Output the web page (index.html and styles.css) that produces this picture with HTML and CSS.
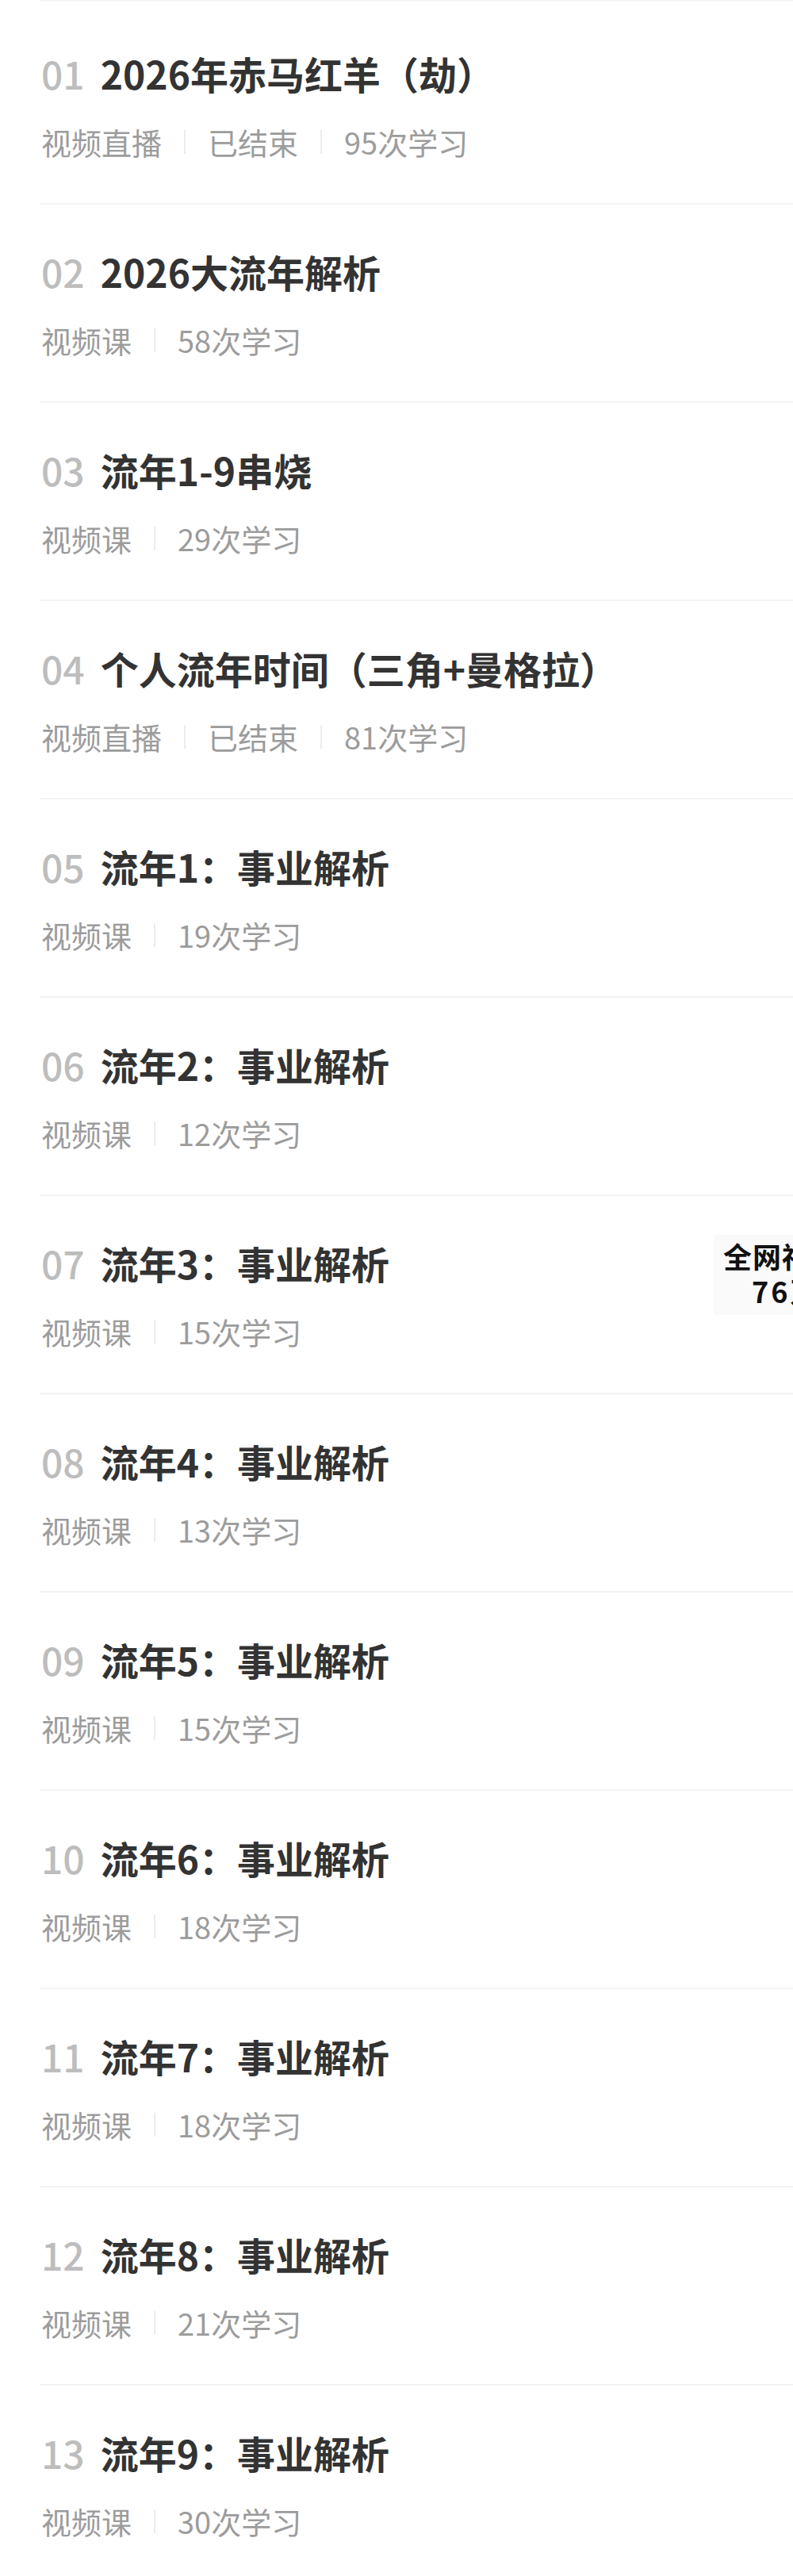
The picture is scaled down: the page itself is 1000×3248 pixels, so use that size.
FILE: index.html
```html
<!DOCTYPE html>
<html lang="zh-CN">
<head>
    <meta charset="UTF-8">
    <meta name="viewport" content="width=device-width, initial-scale=1.0">
    <title>课程目录</title>
    <link rel="stylesheet" href="styles.css">
</head>
<body>
    <div class="catalog">
        <div class="lesson">
            <div class="lesson-title"><span class="num">01</span>2026年赤马红羊（劫）</div>
            <div class="lesson-meta"><span>视频直播</span><span>已结束</span><span>95次学习</span></div>
        </div>
        <div class="lesson">
            <div class="lesson-title"><span class="num">02</span>2026大流年解析</div>
            <div class="lesson-meta"><span>视频课</span><span>58次学习</span></div>
        </div>
        <div class="lesson">
            <div class="lesson-title"><span class="num">03</span>流年1-9串烧</div>
            <div class="lesson-meta"><span>视频课</span><span>29次学习</span></div>
        </div>
        <div class="lesson">
            <div class="lesson-title"><span class="num">04</span>个人流年时间（三角+曼格拉）</div>
            <div class="lesson-meta"><span>视频直播</span><span>已结束</span><span>81次学习</span></div>
        </div>
        <div class="lesson">
            <div class="lesson-title"><span class="num">05</span>流年1：事业解析</div>
            <div class="lesson-meta"><span>视频课</span><span>19次学习</span></div>
        </div>
        <div class="lesson">
            <div class="lesson-title"><span class="num">06</span>流年2：事业解析</div>
            <div class="lesson-meta"><span>视频课</span><span>12次学习</span></div>
        </div>
        <div class="lesson">
            <div class="lesson-title"><span class="num">07</span>流年3：事业解析</div>
            <div class="lesson-meta"><span>视频课</span><span>15次学习</span></div>
        </div>
        <div class="lesson">
            <div class="lesson-title"><span class="num">08</span>流年4：事业解析</div>
            <div class="lesson-meta"><span>视频课</span><span>13次学习</span></div>
        </div>
        <div class="lesson">
            <div class="lesson-title"><span class="num">09</span>流年5：事业解析</div>
            <div class="lesson-meta"><span>视频课</span><span>15次学习</span></div>
        </div>
        <div class="lesson">
            <div class="lesson-title"><span class="num">10</span>流年6：事业解析</div>
            <div class="lesson-meta"><span>视频课</span><span>18次学习</span></div>
        </div>
        <div class="lesson">
            <div class="lesson-title"><span class="num">11</span>流年7：事业解析</div>
            <div class="lesson-meta"><span>视频课</span><span>18次学习</span></div>
        </div>
        <div class="lesson">
            <div class="lesson-title"><span class="num">12</span>流年8：事业解析</div>
            <div class="lesson-meta"><span>视频课</span><span>21次学习</span></div>
        </div>
        <div class="lesson">
            <div class="lesson-title"><span class="num">13</span>流年9：事业解析</div>
            <div class="lesson-meta"><span>视频课</span><span>30次学习</span></div>
        </div>
    </div>

    <div class="float-tip">
        <div class="tip-line">全网福利</div>
        <div class="tip-line tip-count">76万+</div>
    </div>
</body>
</html>
```

FILE: styles.css
```css
html, body {
    margin: 0;
    height: 3248px;
    overflow: hidden;
}

body {
    background-color: #fff;
    font-family: "Noto Sans CJK SC", "Noto Sans", sans-serif;
    position: relative;
}

.catalog {
    padding-top: 6px;
    margin-left: 50px;
    border-top: 2px solid #f6f6f6;
}

.lesson {
    height: 250px;
    box-sizing: border-box;
    padding: 54px 0 0 2px;
    border-bottom: 2px solid #f3f3f3;
}

.lesson-title {
    font-size: 48px;
    line-height: 60px;
    font-weight: 700;
    color: #333;
    white-space: nowrap;
}

.num {
    color: #bdbdbd;
    font-weight: 500;
    margin-right: 20px;
}

.lesson-meta {
    display: flex;
    align-items: center;
    margin-top: 32px;
    font-size: 38px;
    line-height: 50px;
    color: #9c9c9c;
}

.lesson-meta span + span {
    border-left: 2px solid #ececec;
    padding-left: 28px;
    margin-left: 28px;
    line-height: 30px;
}

.float-tip {
    position: absolute;
    left: 900px;
    top: 1557px;
    width: 100px;
    height: 101px;
    box-sizing: border-box;
    padding: 4px 0 0 12px;
    background-color: #fafafa;
    overflow: hidden;
    white-space: nowrap;
}

.tip-line {
    font-size: 36px;
    line-height: 44px;
    font-weight: 700;
    color: #111;
    letter-spacing: 1px;
}

.tip-count {
    padding-left: 36px;
    letter-spacing: 3px;
}
```
